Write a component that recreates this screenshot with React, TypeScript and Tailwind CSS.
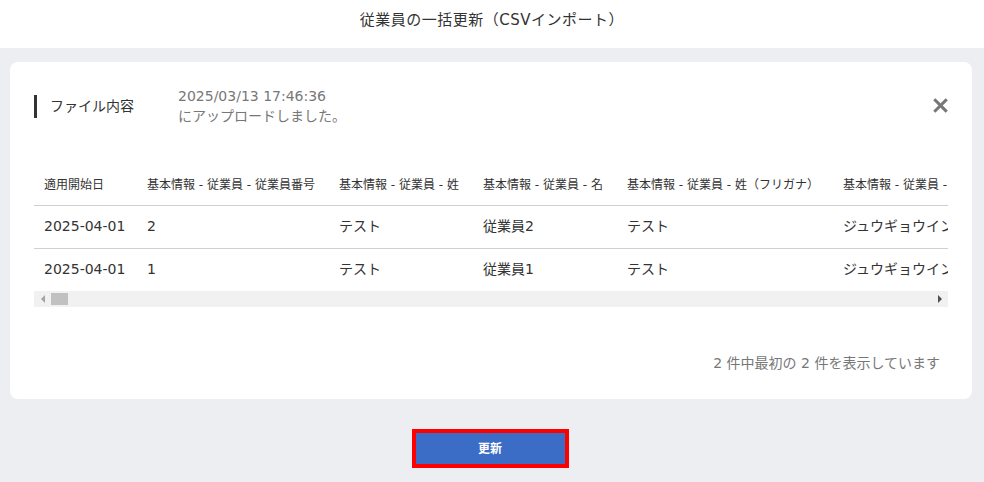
import React from 'react';

const COLUMNS: { label: string; width: string }[] = [
    { label: '適用開始日', width: 'w-[103px]' },
    { label: '基本情報 - 従業員 - 従業員番号', width: 'w-[192px]' },
    { label: '基本情報 - 従業員 - 姓', width: 'w-[144px]' },
    { label: '基本情報 - 従業員 - 名', width: 'w-[144px]' },
    { label: '基本情報 - 従業員 - 姓（フリガナ）', width: 'w-[216px]' },
    { label: '基本情報 - 従業員 - 名（フリガナ）', width: 'w-[216px]' },
];

const ROWS: string[][] = [
    ['2025-04-01', '2', 'テスト', '従業員2', 'テスト', 'ジュウギョウイン2'],
    ['2025-04-01', '1', 'テスト', '従業員1', 'テスト', 'ジュウギョウイン1'],
];

export default function App() {
    return (
        <div
            className="min-h-screen bg-[#edeef2] text-[#333]"
            style={{ fontFamily: '"DejaVu Sans", "Noto Sans CJK JP", sans-serif' }}
        >
            <header className="h-[48px] bg-white flex items-center justify-center">
                <h1 className="text-[15px] leading-[20px] -mt-[8px] tracking-[0.5px]">従業員の一括更新（CSVインポート）</h1>
            </header>

            <main className="px-[10px] pt-[14px] pr-[12px]">
                <section className="bg-white rounded-lg px-6 pt-6 pb-[26px]">
                    <div className="flex items-center">
                        <div className="w-[144px] flex items-center">
                            <span className="w-[3px] h-[23px] bg-[#333]" />
                            <span className="ml-[13px] text-[14px] leading-[20px]">ファイル内容</span>
                        </div>
                        <div className="text-[14px] leading-[20px] text-[#777]">
                            <div>2025/03/13 17:46:36</div>
                            <div>にアップロードしました。</div>
                        </div>
                        <button type="button" className="ml-auto w-[15px] h-[15px] text-[#777] mt-[-2px]">
                            <svg viewBox="0 0 16 16" className="w-[15px] h-[15px]">
                                <path d="M2.5 2.5 L13.5 13.5 M13.5 2.5 L2.5 13.5" stroke="currentColor" strokeWidth="3.2" strokeLinecap="square" />
                            </svg>
                        </button>
                    </div>

                    <div className="mt-[40px] overflow-hidden">
                        <table className="table-fixed w-[1015px] border-collapse whitespace-nowrap text-left">
                            <thead>
                                <tr className="h-[39px] border-b border-[#d0d0d0]">
                                    {COLUMNS.map(col => (
                                        <th key={col.label} className={`${col.width} px-[10px] text-[12px] font-normal`}>
                                            {col.label}
                                        </th>
                                    ))}
                                </tr>
                            </thead>
                            <tbody>
                                {ROWS.map((row, i) => (
                                    <tr key={i} className={`h-[43px] ${i < ROWS.length - 1 ? 'border-b border-[#d0d0d0]' : ''}`}>
                                        {row.map((cell, j) => (
                                            <td key={j} className="px-[10px] text-[14px]">
                                                {cell}
                                            </td>
                                        ))}
                                    </tr>
                                ))}
                            </tbody>
                        </table>
                    </div>

                    <div className="h-[16px] bg-[#f1f1f1] flex items-center">
                        <span className="w-[17px] flex justify-center">
                            <span className="w-0 h-0 border-y-[4px] border-y-transparent border-r-[4px] border-r-[#a3a3a3]" />
                        </span>
                        <span className="w-[17px] h-[12px] bg-[#c1c1c1]" />
                        <span className="ml-auto w-[17px] flex justify-center">
                            <span className="w-0 h-0 border-y-[4px] border-y-transparent border-l-[4px] border-l-[#505050]" />
                        </span>
                    </div>

                    <p className="mt-[46px] pr-[8px] text-right text-[14px] leading-[20px] text-[#777]">
                        2 件中最初の 2 件を表示しています
                    </p>
                </section>

                <div className="flex justify-center pt-[30px] pb-[14px]">
                    <button
                        type="button"
                        className="w-[157px] h-[39px] border-4 border-[#ff0000] bg-[#3b6cc6] text-white text-[12px] font-bold -ml-[2px]"
                    >
                        更新
                    </button>
                </div>
            </main>
        </div>
    );
}
